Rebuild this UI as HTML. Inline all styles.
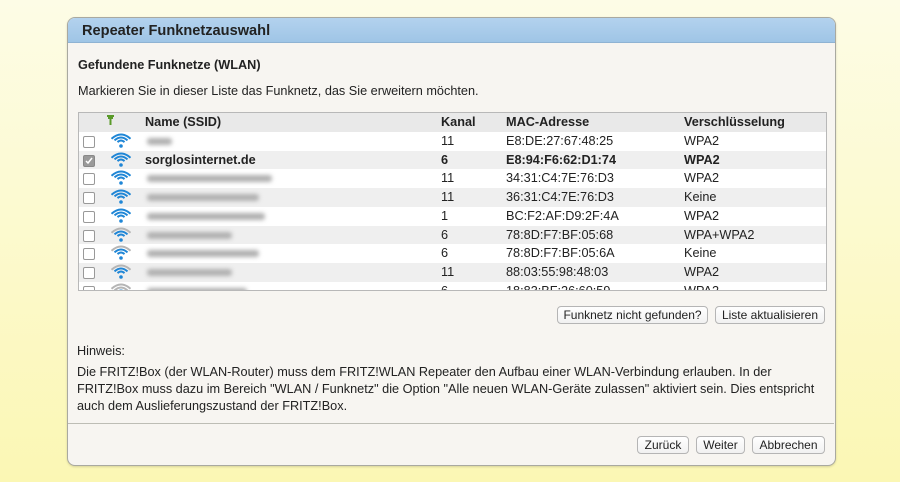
<!DOCTYPE html><html><head><meta charset="utf-8"><style>
body{margin:0;width:900px;height:482px;background:linear-gradient(#fdfce6,#fbf7b4);font-family:"Liberation Sans",sans-serif;font-size:12.7px;color:#222;position:relative;overflow:hidden}
.dlg{position:absolute;left:67px;top:17px;width:767px;height:447px;background:#f7f5f1;border:1px solid #a9a9a0;border-radius:8px;overflow:hidden;box-shadow:0 1px 2px rgba(0,0,0,.15)}
.hd{height:24px;background:linear-gradient(#b3d2ee,#9fc5e6);border-bottom:1px solid #8fb3d3;font-weight:bold;font-size:14.6px;line-height:26px;padding-left:14px;color:#222}
.a{position:absolute}
.tbl{position:absolute;left:10px;top:94px;width:747px;height:177px;border:1px solid #b8b8b8;background:#fff;overflow:hidden}
.row{position:absolute;left:0;width:747px;height:19px;line-height:19px}
.row span{position:absolute}
.cb{position:absolute;left:4px;top:4px;width:10px;height:10px;border:1px solid #999;border-radius:2px;background:#fff}
.blur{position:absolute;left:68px;top:6px;height:7px;background:#b0b0b0;filter:blur(2px);border-radius:3px}
.btn{position:absolute;height:16px;border:1px solid #b5b5b5;border-radius:4px;background:linear-gradient(#fff,#f1f1f1);font-size:12px;line-height:16px;text-align:center;color:#222}
</style></head><body>
<div class="dlg">
<div class="hd">Repeater Funknetzauswahl</div>
<div class="a" style="left:10px;top:40px;font-weight:bold">Gefundene Funknetze (WLAN)</div>
<div class="a" style="left:10px;top:66px">Markieren Sie in dieser Liste das Funknetz, das Sie erweitern möchten.</div>
<div class="tbl">
<div class="row" style="top:0;height:19px;background:#e9e9e9;font-weight:bold">
<svg style="position:absolute;left:27px;top:2px" width="9" height="10"><path d="M1 1h7M2 3h5M4.5 1v9" stroke="#5a9a2a" stroke-width="2"/></svg>
<span style="left:66px">Name (SSID)</span><span style="left:362px">Kanal</span><span style="left:427px">MAC-Adresse</span><span style="left:605px">Verschlüsselung</span></div>
</div>
</div>
<div class="btn" style="left:557px;top:306px;width:149px">Funknetz nicht gefunden?</div>
<div class="btn" style="left:715px;top:306px;width:108px">Liste aktualisieren</div>
<div class="a" style="left:77px;top:344px">Hinweis:</div>
<div class="a" style="left:77px;top:364px;width:745px;line-height:17px">Die FRITZ!Box (der WLAN-Router) muss dem FRITZ!WLAN Repeater den Aufbau einer WLAN-Verbindung erlauben. In der FRITZ!Box muss dazu im Bereich "WLAN / Funknetz" die Option "Alle neuen WLAN-Geräte zulassen" aktiviert sein. Dies entspricht auch dem Auslieferungszustand der FRITZ!Box.</div>
<div class="a" style="left:68px;top:423px;width:766px;border-top:1px solid #bdbdb5"></div>
<div class="btn" style="left:637px;top:436px;width:50px">Zurück</div>
<div class="btn" style="left:696px;top:436px;width:47px">Weiter</div>
<div class="btn" style="left:752px;top:436px;width:71px">Abbrechen</div>
<script>
var rows=[["","11","E8:DE:27:67:48:25","WPA2",4,25],["sorglosinternet.de","6","E8:94:F6:62:D1:74","WPA2",3,0],["","11","34:31:C4:7E:76:D3","WPA2",4,125],["","11","36:31:C4:7E:76:D3","Keine",4,112],["","1","BC:F2:AF:D9:2F:4A","WPA2",3,118],["","6","78:8D:F7:BF:05:68","WPA+WPA2",2,85],["","6","78:8D:F7:BF:05:6A","Keine",2,112],["","11","88:03:55:98:48:03","WPA2",2,85],["","6","18:83:BF:26:60:59","WPA2",1,100]];
var t=document.querySelector('.tbl'),h='';
rows.forEach(function(r,i){var top=19+i*18.7,bg=i%2?'#efefef':'#fff',b=i==1?'font-weight:bold;':'';
function arc(rad,on){return '<path d="M'+(10-rad)+' '+(12-rad*0.55)+' Q10 '+(12-rad*1.45)+' '+(10+rad)+' '+(12-rad*0.55)+'" fill="none" stroke="'+(on?'#1f86d6':'#b5b5b5')+'" stroke-width="2"/>';}
var ic='<svg style="position:absolute;left:32px;top:0" width="20" height="19"><circle cx="10" cy="14" r="1.8" fill="#1f86d6"/>'+arc(3.5,r[4]>=1)+arc(6.5,r[4]>=2)+arc(9.5,r[4]>=3)+'</svg>';
var name=r[0]?'<span style="left:66px">'+r[0]+'</span>':'<div class="blur" style="width:'+(r[5]||20)+'px"></div>';
var cb=i==1?'<div class="cb" style="background:#9a9a9a;border-color:#888"><svg width="10" height="10" style="position:absolute;left:0;top:0"><path d="M2 5l2 2 4-5" stroke="#fff" stroke-width="1.5" fill="none"/></svg></div>':'<div class="cb"></div>';
h+='<div class="row" style="top:'+top+'px;background:'+bg+';'+b+'">'+cb+ic+name+'<span style="left:362px">'+r[1]+'</span><span style="left:427px">'+r[2]+'</span><span style="left:605px">'+r[3]+'</span></div>';});
t.innerHTML+=h;
</script>
</body></html>
